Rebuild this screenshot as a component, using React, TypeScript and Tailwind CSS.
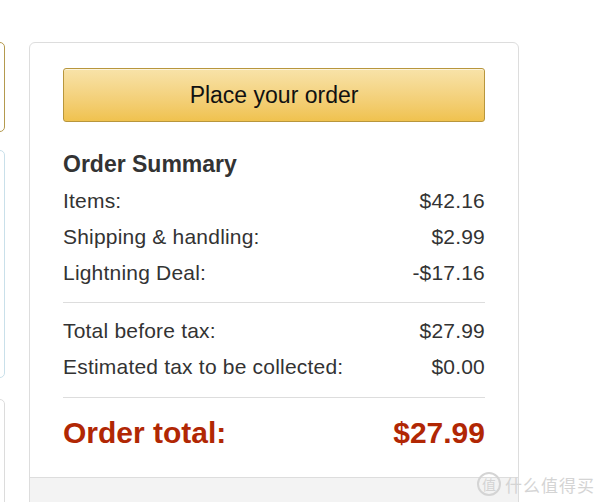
import React from "react";

const rows1 = [
  { label: "Items:", value: "$42.16" },
  { label: "Shipping & handling:", value: "$2.99" },
  { label: "Lightning Deal:", value: "-$17.16" },
];

const rows2 = [
  { label: "Total before tax:", value: "$27.99" },
  { label: "Estimated tax to be collected:", value: "$0.00" },
];

function Row({ label, value }: { label: string; value: string }) {
  return (
    <div className="flex justify-between text-[21px] leading-[36px] tracking-[0.2px] text-[#333]">
      <span>{label}</span>
      <span>{value}</span>
    </div>
  );
}

export default function App() {
  return (
    <div
      className="relative w-[600px] h-[502px] overflow-hidden bg-white"
      style={{ fontFamily: '"Liberation Sans", Arial, sans-serif' }}
    >
      <div className="flex gap-[24px] pt-[42px]">
        {/* edge of the neighbouring column */}
        <div className="w-[5px] overflow-hidden shrink-0 flex flex-col">
          <div className="ml-[-40px] w-[45px] h-[90px] rounded-[5px] border border-[#b49a4e]" />
          <div className="ml-[-40px] w-[45px] h-[228px] mt-[18px] rounded-[5px] border border-[#c9e0ea]" />
          <div className="ml-[-40px] w-[45px] h-[200px] mt-[21px] rounded-[5px] border border-[#dcdcdc]" />
        </div>

        {/* order summary panel */}
        <div className="w-[490px] shrink-0 h-[520px] rounded-[6px] border border-[#dddddd] flex flex-col overflow-hidden">
          <div className="px-[33px] pt-[25px] pb-[20px]">
            <button className="w-full h-[54px] rounded-[3px] border border-[#b8963c] bg-gradient-to-b from-[#f8e3a9] to-[#f0c24e] text-[23px] text-[#111] shadow-[inset_0_1px_0_rgba(255,255,255,0.6)]">
              Place your order
            </button>
            <h3 className="mt-[27px] text-[23px] leading-[30px] font-bold text-[#333]">
              Order Summary
            </h3>
            <div className="mt-[4px]">
              {rows1.map((r) => (
                <Row key={r.label} {...r} />
              ))}
            </div>
            <div className="mt-[11px] h-px bg-[#dddddd]" />
            <div className="mt-[10px]">
              {rows2.map((r) => (
                <Row key={r.label} {...r} />
              ))}
            </div>
            <div className="mt-[12px] h-px bg-[#dddddd]" />
            <div className="mt-[11px] flex justify-between text-[30px] leading-[48px] font-bold text-[#b12704]">
              <span>Order total:</span>
              <span>$27.99</span>
            </div>
          </div>
          <div className="flex-1 border-t border-[#dddddd] bg-[#f3f3f3]" />
        </div>
      </div>

      {/* site watermark */}
      <div className="absolute left-[477px] top-[472px] flex items-center gap-[4px] whitespace-nowrap text-[#d4d4d4]">
        <span
          className="w-[24px] h-[24px] rounded-full border-2 border-[#d4d4d4] flex items-center justify-center text-[14px] leading-none"
          style={{ fontFamily: '"Noto Sans CJK SC", sans-serif' }}
        >
          值
        </span>
        <span
          className="text-[17px] leading-none tracking-[1px]"
          style={{ fontFamily: '"Noto Sans CJK SC", sans-serif' }}
        >
          什么值得买
        </span>
      </div>
    </div>
  );
}
